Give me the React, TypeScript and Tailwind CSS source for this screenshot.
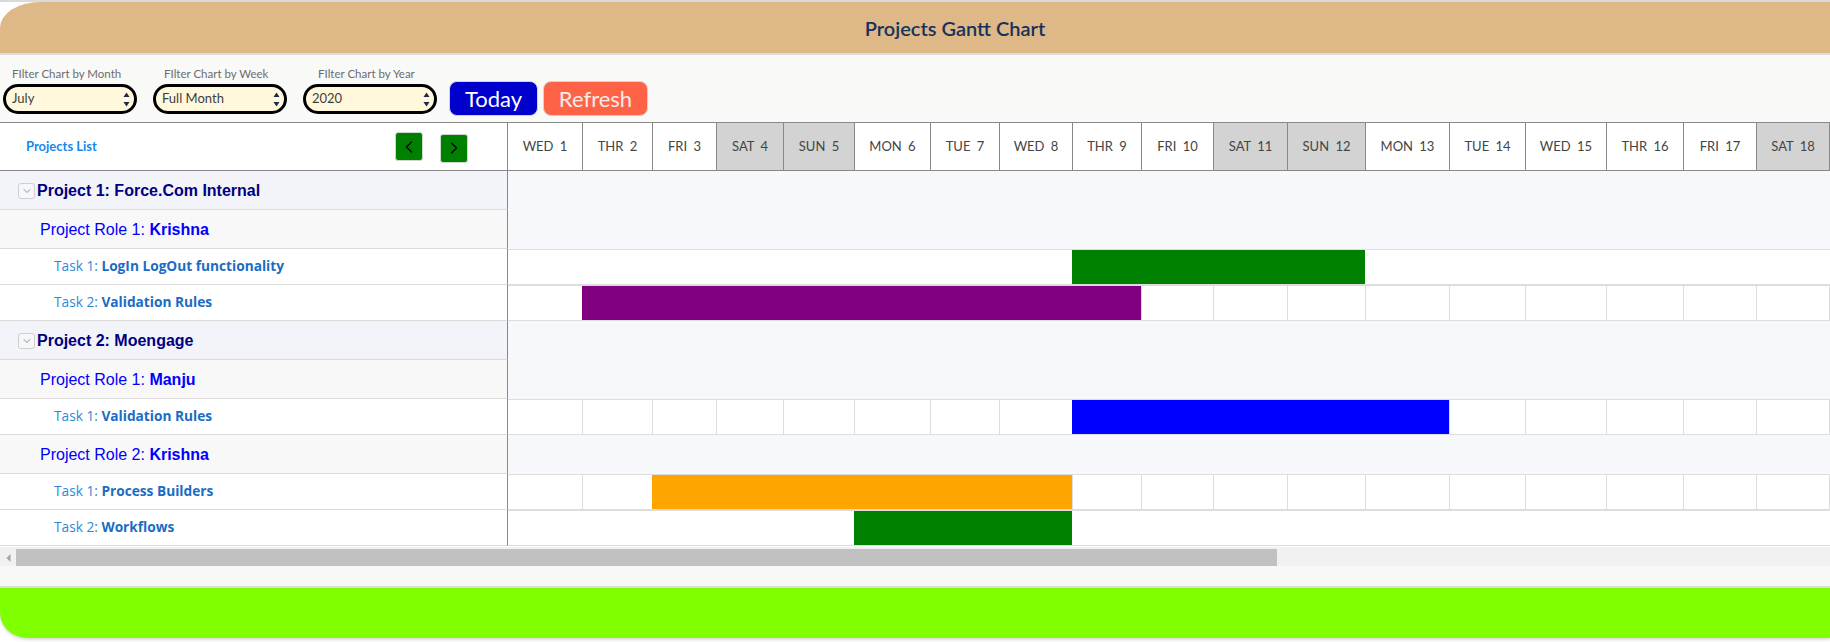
import React from "react";
import { ChevronLeft, ChevronRight, ChevronDown } from "lucide-react";

type Day = { d: string; n: string; w: number; we: boolean };

const days: Day[] = [
  { d: "WED", n: "1", w: 74, we: false },
  { d: "THR", n: "2", w: 70, we: false },
  { d: "FRI", n: "3", w: 64, we: false },
  { d: "SAT", n: "4", w: 67, we: true },
  { d: "SUN", n: "5", w: 71, we: true },
  { d: "MON", n: "6", w: 76, we: false },
  { d: "TUE", n: "7", w: 69, we: false },
  { d: "WED", n: "8", w: 73, we: false },
  { d: "THR", n: "9", w: 69, we: false },
  { d: "FRI", n: "10", w: 72, we: false },
  { d: "SAT", n: "11", w: 74, we: true },
  { d: "SUN", n: "12", w: 78, we: true },
  { d: "MON", n: "13", w: 84, we: false },
  { d: "TUE", n: "14", w: 76, we: false },
  { d: "WED", n: "15", w: 81, we: false },
  { d: "THR", n: "16", w: 77, we: false },
  { d: "FRI", n: "17", w: 73, we: false },
  { d: "SAT", n: "18", w: 74, we: true },
];

type Bar = { start: number; end: number; cls: string };
type Row =
  | { kind: "project"; label: string }
  | { kind: "role"; n: number; name: string }
  | { kind: "task"; n: number; name: string; bar: Bar; grid: boolean };

const rows: Row[] = [
  { kind: "project", label: "Project 1: Force.Com Internal" },
  { kind: "role", n: 1, name: "Krishna" },
  { kind: "task", n: 1, name: "LogIn LogOut functionality", bar: { start: 8, end: 11, cls: "bg-[#008000]" }, grid: false },
  { kind: "task", n: 2, name: "Validation Rules", bar: { start: 1, end: 8, cls: "bg-[#800080]" }, grid: true },
  { kind: "project", label: "Project 2: Moengage" },
  { kind: "role", n: 1, name: "Manju" },
  { kind: "task", n: 1, name: "Validation Rules", bar: { start: 8, end: 12, cls: "bg-[#0000ff]" }, grid: true },
  { kind: "role", n: 2, name: "Krishna" },
  { kind: "task", n: 1, name: "Process Builders", bar: { start: 2, end: 7, cls: "bg-[#ffa500]" }, grid: true },
  { kind: "task", n: 2, name: "Workflows", bar: { start: 5, end: 7, cls: "bg-[#008000]" }, grid: false },
];

function SelectArrows() {
  return (
    <svg width="7" height="15" viewBox="0 0 7 15">
      <path d="M3.5 0.5 L6.5 5 H0.5 Z" fill="#1b2a4a" />
      <path d="M3.5 14.5 L6.5 10 H0.5 Z" fill="#1b2a4a" />
    </svg>
  );
}

function FilterSelect({ label, value, labelPad }: { label: string; value: string; labelPad: string }) {
  return (
    <div className="flex flex-col">
      <div className={`text-[11.5px] leading-[16px] text-[#6b6d70] ${labelPad}`}>{label}</div>
      <div className="mt-[2px] w-[134px] h-[30px] rounded-full border-[3px] border-black bg-[#fff8dc] flex items-center justify-between pl-[6px] pr-[4px]">
        <span className="text-[13px] text-[#3e3e3c]">{value}</span>
        <SelectArrows />
      </div>
    </div>
  );
}

function TaskCells({ bar, grid }: { bar: Bar; grid: boolean }) {
  const out: React.ReactNode[] = [];
  let i = 0;
  while (i < days.length) {
    if (i === bar.start) {
      let w = 0;
      for (let k = bar.start; k <= bar.end; k++) w += days[k].w;
      out.push(<div key={"b" + i} className={`h-full shrink-0 ${bar.cls}`} style={{ width: w }} />);
      i = bar.end + 1;
      continue;
    }
    const last = i === days.length - 1;
    const cls = grid
      ? `h-full shrink-0 border-[#dddddd] ${i === 0 ? "" : "border-l"} ${last ? "border-r" : ""}`
      : "h-full shrink-0";
    out.push(<div key={i} className={cls} style={{ width: days[i].w }} />);
    i++;
  }
  return <>{out}</>;
}

export default function App() {
  return (
    <div className="w-[1830px] h-[642px] bg-white overflow-hidden font-['Lato',sans-serif]">
      <div className="h-[2px] bg-[#d9d9d9]" />
      <div className="h-[51px] bg-[#deb887] rounded-tl-[40px_26px] flex items-center justify-center pl-[80px]">
        <h1 className="text-[20px] font-semibold text-[#16325c]">Projects Gantt Chart</h1>
      </div>
      <div className="h-[2px] bg-[#dcdcdc]" />

      <div className="h-[67px] bg-[#f9f9f7] flex items-end pl-[3px] pb-[8px] gap-[16px]">
        <FilterSelect label="FIlter Chart by Month" value="July" labelPad="pl-[9px]" />
        <FilterSelect label="FIlter Chart by Week" value="Full Month" labelPad="pl-[11px]" />
        <FilterSelect label="FIlter Chart by Year" value="2020" labelPad="pl-[15px]" />
        <div className="flex items-end mb-[-2px] ml-[-4px] gap-[5px]">
          <button className="h-[35px] w-[89px] rounded-[8px] bg-[#0000cd] border border-[#d4d4d4] text-white text-[22px] flex items-center justify-center">
            Today
          </button>
          <button className="h-[35px] w-[105px] rounded-[8px] bg-[#ff6347] border border-[#d4d4d4] text-[#f8ecea] text-[22px] flex items-center justify-center">
            Refresh
          </button>
        </div>
      </div>

      <div className="h-[49px] border-y border-[#888888] flex">
        <div className="w-[508px] shrink-0 border-r border-[#888888] bg-white flex items-center justify-between pl-[26px] pr-[39px]">
          <span className="text-[13px] font-bold text-[#1589ee]">Projects List</span>
          <div className="flex items-center gap-[17px]">
            <button className="w-[28px] h-[29px] rounded-[3px] bg-[#008000] border border-[#cfd8cf] flex items-center justify-center">
              <ChevronLeft size={20} strokeWidth={1.6} color="#000" />
            </button>
            <button className="w-[28px] h-[29px] mt-[3px] rounded-[3px] bg-[#008000] border border-[#cfd8cf] flex items-center justify-center">
              <ChevronRight size={20} strokeWidth={1.6} color="#000" />
            </button>
          </div>
        </div>
        <div className="flex">
          {days.map((d, i) => (
            <div
              key={i}
              style={{ width: d.w }}
              className={`h-full shrink-0 flex items-center justify-center text-[13px] text-[#444444] [word-spacing:3px] border-[#888888] ${i === 0 ? "" : "border-l"} ${i === days.length - 1 ? "border-r" : ""} ${d.we ? "bg-[#d3d3d3]" : "bg-white"}`}
            >
              {d.d} {d.n}
            </div>
          ))}
        </div>
      </div>

      <div className="flex flex-col">
        {rows.map((r, idx) => {
          if (r.kind === "project") {
            return (
              <div key={idx} className="h-[39px] flex">
                <div className="w-[508px] shrink-0 border-r border-r-[#888888] border-b border-b-[#dddbda] bg-[#f3f4f9] flex items-center pl-[18px] pt-[2px]">
                  <div className="w-[17px] h-[16px] mr-[2px] rounded-[3px] border border-[#cfcfcf] bg-[#f6f7fa] flex items-center justify-center">
                    <ChevronDown size={12} strokeWidth={1.5} color="#706e6b" />
                  </div>
                  <span className="font-['Liberation_Sans',Arial,sans-serif] font-bold text-[16px] text-[#000080]">{r.label}</span>
                </div>
                <div className="flex-1 bg-[#f7f8fc]" />
              </div>
            );
          }
          if (r.kind === "role") {
            return (
              <div key={idx} className="h-[39px] flex">
                <div className="w-[508px] shrink-0 border-r border-r-[#888888] border-b border-b-[#dddbda] bg-[#f8f8f8] flex items-center pl-[40px] pt-[1px] font-['Liberation_Sans',Arial,sans-serif] text-[16px] text-[#0000ff]">
                  <span>Project Role {r.n}:&nbsp;</span>
                  <span className="font-bold">{r.name}</span>
                </div>
                <div className="flex-1 bg-[#f7f8fc]" />
              </div>
            );
          }
          return (
            <div key={idx} className="h-[36px] flex">
              <div className="w-[508px] shrink-0 border-r border-r-[#888888] border-b border-b-[#dddbda] bg-white flex items-center pl-[54px] text-[13.7px] font-['Open_Sans',sans-serif]">
                <span className="text-[#2b8ad8]">Task {r.n}:&nbsp;</span>
                <span className="font-bold text-[#1a6cc4]">{r.name}</span>
              </div>
              <div className="flex-1 flex border-y border-[#dddddd] bg-white">
                <TaskCells bar={r.bar} grid={r.grid} />
              </div>
            </div>
          );
        })}
      </div>

      <div className="h-[1px] bg-white" />
      <div className="h-[19px] bg-[#f1f1f1] flex">
        <div className="w-[16px] shrink-0 flex items-center justify-center pt-[2px]">
          <svg width="5" height="8" viewBox="0 0 5 8">
            <path d="M4.5 0 L0.5 4 L4.5 8 Z" fill="#a3a3a3" />
          </svg>
        </div>
        <div className="mt-[2px] h-[17px] w-[1261px] bg-[#c1c1c1]" />
      </div>
      <div className="h-[20px] bg-[#f8f8f6]" />
      <div className="h-[2px] bg-[#dcdcdc]" />
      <div className="h-[50px] bg-[#7fff00] rounded-bl-[28px_25px] shadow-[0_2px_3px_rgba(0,0,0,0.15)]" />
    </div>
  );
}
